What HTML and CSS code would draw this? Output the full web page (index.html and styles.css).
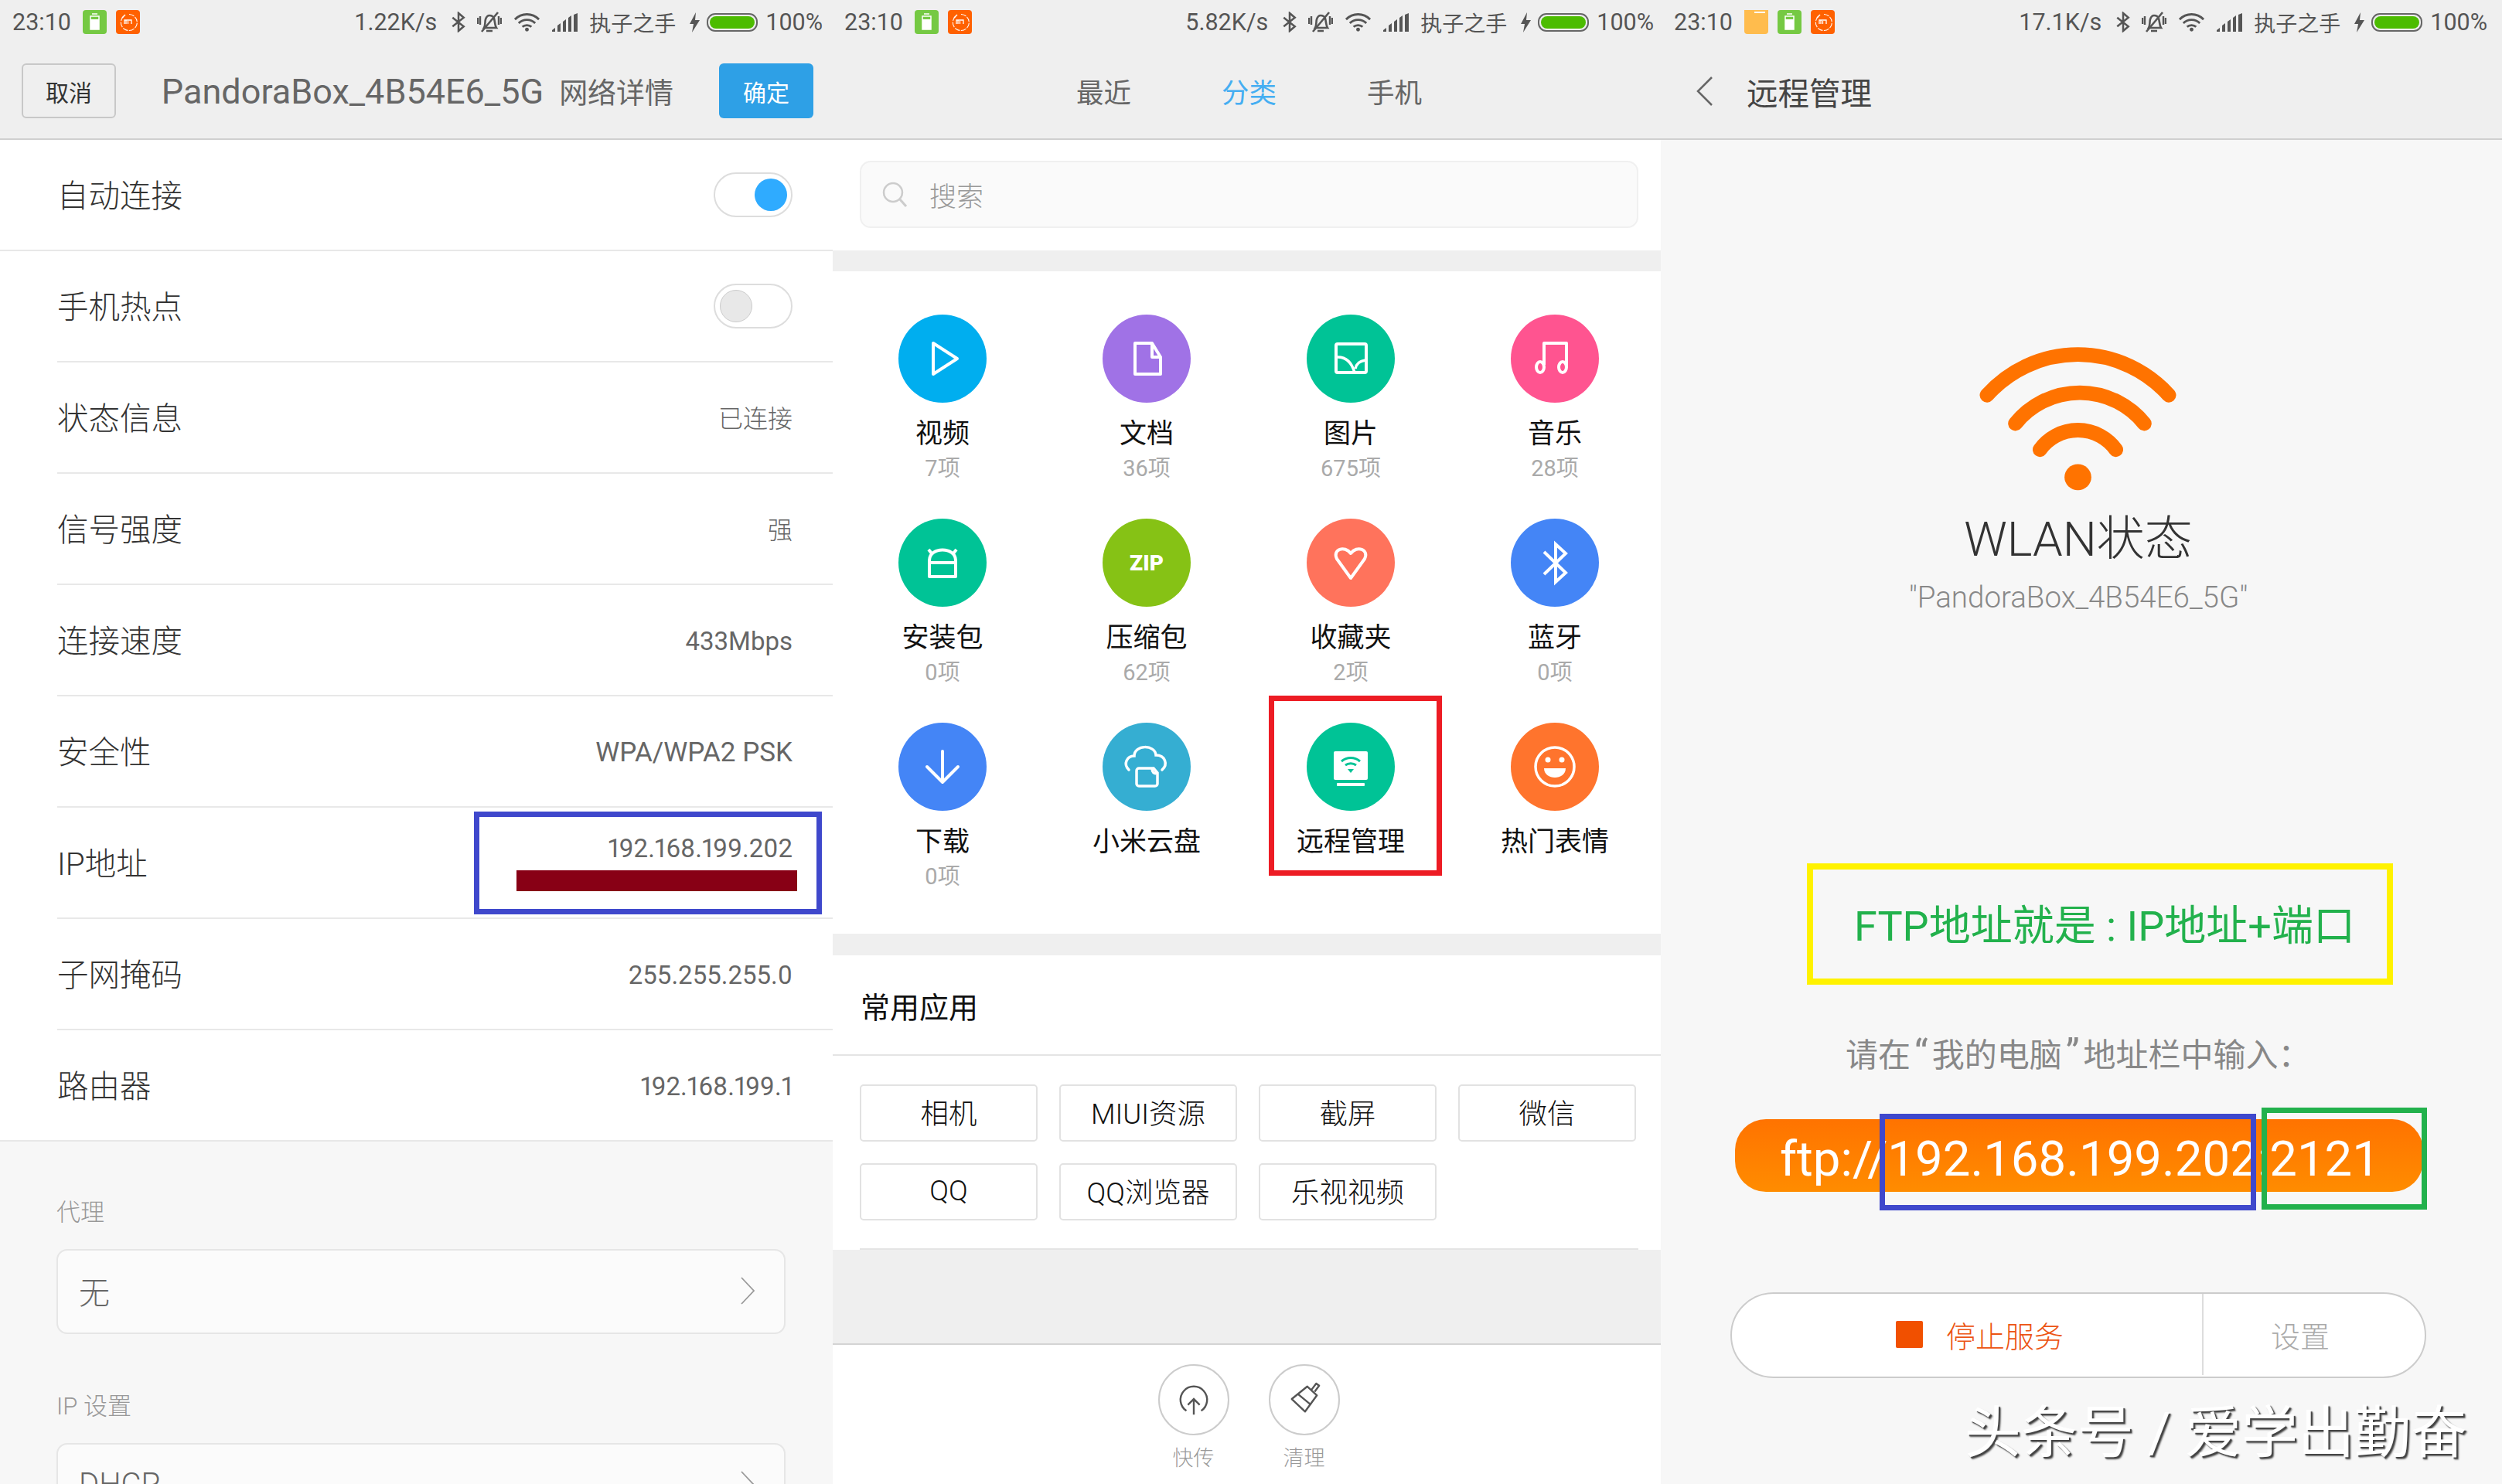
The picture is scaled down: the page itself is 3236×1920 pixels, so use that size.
FILE: index.html
```html
<!DOCTYPE html>
<html lang="zh-CN">
<head>
    <meta charset="UTF-8">
    <title>FTP</title>
    <link rel="stylesheet" href="styles.css">
</head>
<body>

    <svg class="defs" width="0" height="0">
        <symbol id="s-bt" viewBox="0 0 20 28"><path d="M2 8l15 12-7 6V2l7 6L2 20" fill="none" stroke="#555" stroke-width="2.6"/></symbol>
        <symbol id="s-bell" viewBox="0 0 32 30"><path d="M9 22c2-3 1-8 2-11 1-3 3-5 5-5s5 1 6 4c1 3 1 9 3 12z" fill="none" stroke="#555" stroke-width="2.6"/><path d="M12 26h8M1 9v8M4 7v11M31 9v8M28 7v11" stroke="#555" stroke-width="2.4" fill="none"/><path d="M6 27L27 2" stroke="#555" stroke-width="2.6"/></symbol>
        <symbol id="s-wifi" viewBox="0 0 36 25"><path d="M2 9c9-9 23-9 32 0M7 14c6-6 16-6 22 0M12 19c3-3 9-3 12 0" fill="none" stroke="#555" stroke-width="3"/><circle cx="18" cy="22.5" r="2.5" fill="#555"/></symbol>
        <symbol id="s-signal" viewBox="0 0 33 24"><path d="M0 24v-2l4-3v5zM7 24v-8l4-3v11zM14 24V11l4-3v16zM21 24V6l4-3v21zM28 24V2l5-2v24z" fill="#555"/></symbol>
        <symbol id="s-bolt" viewBox="0 0 15 26"><path d="M9 0L1 15h5l-2 11 10-16H8z" fill="#555"/></symbol>
        <symbol id="s-batt" viewBox="0 0 66 24"><rect x="1" y="1" width="64" height="22" rx="10" fill="none" stroke="#666" stroke-width="2"/><rect x="4" y="4" width="58" height="16" rx="8" fill="#4cbc00"/></symbol>
        <symbol id="s-green" viewBox="0 0 31 31"><rect width="31" height="31" rx="4" fill="#75c943"/><path d="M12 5h7M10 8h11v17H10z" fill="none" stroke="#fff" stroke-width="1.5"/><rect x="10" y="12" width="11" height="13" fill="#fff"/></symbol>
        <symbol id="s-mi" viewBox="0 0 31 31"><rect width="31" height="31" rx="4" fill="#ff6100"/><path d="M10 8A10.5 10.5 0 1 0 17 5.500" fill="none" stroke="#fff" stroke-width="1.100" stroke-dasharray="7 1.500"/><path d="M8 10l4-4" stroke="#fff" stroke-width="1.500"/><path d="M11 18v-5h9v5M15.500 14v4M13 13v5" fill="none" stroke="#fff" stroke-width="1.300"/></symbol>
        <symbol id="s-folder" viewBox="0 0 31 31"><rect width="31" height="41" y="-10" rx="4" fill="#ffbc4d"/><path d="M13 3h14" stroke="#fff" stroke-width="2"/></symbol>
    </svg>

    <div class="screen">

        <!-- wifi details -->
        <section class="panel panel-wifi">
            <div class="statusbar">
                <span class="time">23:10</span>
                <svg class="st-app"><use href="#s-green"/></svg>
                <svg class="st-app"><use href="#s-mi"/></svg>
                <span class="status-right">
                    <span class="speed">1.22K/s</span>
                    <svg class="st-bt"><use href="#s-bt"/></svg>
                    <svg class="st-bell"><use href="#s-bell"/></svg>
                    <svg class="st-wifi"><use href="#s-wifi"/></svg>
                    <svg class="st-signal"><use href="#s-signal"/></svg>
                    <span class="carrier">执子之手</span>
                    <svg class="st-bolt"><use href="#s-bolt"/></svg>
                    <svg class="st-batt"><use href="#s-batt"/></svg>
                    <span class="percent">100%</span>
                </span>
            </div>
            <div class="header header-wifi">
                <span class="btn-cancel">取消</span>
                <span class="wifi-title">PandoraBox_4B54E6_5G<span class="wifi-title-cn">网络详情</span></span>
                <span class="btn-ok">确定</span>
            </div>
            <div class="row row-full">
                <span class="row-label">自动连接</span>
                <span class="toggle toggle-on"><i></i></span>
            </div>
            <div class="row">
                <span class="row-label">手机热点</span>
                <span class="toggle"><i></i></span>
            </div>
            <div class="row"><span class="row-label">状态信息</span><span class="row-value value-small">已连接</span></div>
            <div class="row"><span class="row-label">信号强度</span><span class="row-value value-small">强</span></div>
            <div class="row"><span class="row-label">连接速度</span><span class="row-value">433Mbps</span></div>
            <div class="row"><span class="row-label">安全性</span><span class="row-value value-wide">WPA/WPA2 PSK</span></div>
            <div class="row row-ip">
                <span class="row-label">IP地址</span>
                <div class="ip-mark">
                    <span class="row-value">192.168.199.202</span>
                    <div class="ip-hide"></div>
                </div>
            </div>
            <div class="row"><span class="row-label">子网掩码</span><span class="row-value">255.255.255.0</span></div>
            <div class="row row-full"><span class="row-label">路由器</span><span class="row-value">192.168.199.1</span></div>
            <div class="settings">
                <div class="set-label">代理</div>
                <div class="set-box">
                    <span>无</span>
                    <svg class="chev" viewBox="0 0 20 36"><path d="M2 1l16 17L2 35" fill="none" stroke="#999" stroke-width="1.800"/></svg>
                </div>
                <div class="set-label set-label-2">IP 设置</div>
                <div class="set-box">
                    <span>DHCP</span>
                    <svg class="chev" viewBox="0 0 20 36"><path d="M2 1l16 17L2 35" fill="none" stroke="#999" stroke-width="1.800"/></svg>
                </div>
            </div>
        </section>

        <!-- file manager -->
        <section class="panel panel-files">
            <div class="statusbar">
                <span class="time">23:10</span>
                <svg class="st-app"><use href="#s-green"/></svg>
                <svg class="st-app"><use href="#s-mi"/></svg>
                <span class="status-right">
                    <span class="speed">5.82K/s</span>
                    <svg class="st-bt"><use href="#s-bt"/></svg>
                    <svg class="st-bell"><use href="#s-bell"/></svg>
                    <svg class="st-wifi"><use href="#s-wifi"/></svg>
                    <svg class="st-signal"><use href="#s-signal"/></svg>
                    <span class="carrier">执子之手</span>
                    <svg class="st-bolt"><use href="#s-bolt"/></svg>
                    <svg class="st-batt"><use href="#s-batt"/></svg>
                    <span class="percent">100%</span>
                </span>
            </div>
            <div class="header tabs">
                <span>最近</span>
                <span class="tab-on">分类</span>
                <span>手机</span>
            </div>
            <div class="search-wrap">
                <div class="search">
                    <svg class="search-ico" viewBox="0 0 33 33"><circle cx="14" cy="14" r="12" fill="none" stroke="#ccc" stroke-width="2.500"/><path d="M23 23l8 9" stroke="#ccc" stroke-width="3"/></svg>
                    <span>搜索</span>
                </div>
            </div>
            <div class="cats">
                <div class="cat">
                    <div class="cat-ico c-video"><svg viewBox="0 0 114 114"><path d="M45 37v40l31-20z" fill="none" stroke="#fff" stroke-width="4" stroke-linejoin="round"/></svg></div>
                    <div class="cat-name">视频</div><div class="cat-num">7项</div>
                </div>
                <div class="cat">
                    <div class="cat-ico c-doc"><svg viewBox="0 0 114 114"><path d="M42 37h22l11 18v22H42zM64 37v18h11" fill="none" stroke="#fff" stroke-width="4" stroke-linejoin="round"/></svg></div>
                    <div class="cat-name">文档</div><div class="cat-num">36项</div>
                </div>
                <div class="cat">
                    <div class="cat-ico c-pic"><svg viewBox="0 0 114 114"><rect x="38" y="38" width="39" height="37" rx="2" fill="none" stroke="#fff" stroke-width="4"/><path d="M38 55c12-1 20 6 24 20M63 70c1-6 6-10 13-11" fill="none" stroke="#fff" stroke-width="3.500"/></svg></div>
                    <div class="cat-name">图片</div><div class="cat-num">675项</div>
                </div>
                <div class="cat">
                    <div class="cat-ico c-music"><svg viewBox="0 0 114 114"><path d="M43 65V37h29v30" fill="none" stroke="#fff" stroke-width="4" stroke-linejoin="round"/><ellipse cx="38" cy="68" rx="5" ry="7" fill="none" stroke="#fff" stroke-width="4"/><ellipse cx="67" cy="68" rx="5" ry="7" fill="none" stroke="#fff" stroke-width="4"/></svg></div>
                    <div class="cat-name">音乐</div><div class="cat-num">28项</div>
                </div>
                <div class="cat">
                    <div class="cat-ico c-apk"><svg viewBox="0 0 114 114"><path d="M40 57v-3c0-18 34-18 34 0v21H40zM40 57h34M39 40l4 5M75 40l-4 5" fill="none" stroke="#fff" stroke-width="4" stroke-linejoin="round"/></svg></div>
                    <div class="cat-name">安装包</div><div class="cat-num">0项</div>
                </div>
                <div class="cat">
                    <div class="cat-ico c-zip"><span class="zip">ZIP</span></div>
                    <div class="cat-name">压缩包</div><div class="cat-num">62项</div>
                </div>
                <div class="cat">
                    <div class="cat-ico c-fav"><svg viewBox="0 0 114 114"><path d="M57 77L39 52c-6-12 10-18 18-7 8-11 24-5 18 7z" fill="none" stroke="#fff" stroke-width="4" stroke-linejoin="round"/></svg></div>
                    <div class="cat-name">收藏夹</div><div class="cat-num">2项</div>
                </div>
                <div class="cat">
                    <div class="cat-ico c-bt"><svg viewBox="0 0 114 114"><path d="M43 43l28 27-13 12V33l13 12-28 27" fill="none" stroke="#fff" stroke-width="4"/></svg></div>
                    <div class="cat-name">蓝牙</div><div class="cat-num">0项</div>
                </div>
                <div class="cat">
                    <div class="cat-ico c-bt"><svg viewBox="0 0 114 114"><path d="M57 37v39M37 57l20 20 20-20" fill="none" stroke="#fff" stroke-width="4" stroke-linecap="round" stroke-linejoin="round"/></svg></div>
                    <div class="cat-name">下载</div><div class="cat-num">0项</div>
                </div>
                <div class="cat">
                    <div class="cat-ico c-cloud"><svg viewBox="0 0 114 114"><path d="M34 61c-8-8-2-18 7-18 0-15 27-15 28-1 12 0 16 12 8 19" fill="none" stroke="#fff" stroke-width="3.500" stroke-linecap="round"/><path d="M47 59h19l5 6v14a3 3 0 0 1-3 3H47a3 3 0 0 1-3-3V62a3 3 0 0 1 3-3zM64 59c0 5 2 7 7 7" fill="none" stroke="#fff" stroke-width="3.500"/></svg></div>
                    <div class="cat-name">小米云盘</div>
                </div>
                <div class="cat">
                    <div class="cat-ico c-apk"><svg viewBox="0 0 114 114"><rect x="35" y="37" width="44" height="37" rx="2" fill="#fff"/><rect x="39" y="78" width="36" height="4" rx="1" fill="#fff"/><path d="M45 50c7-6 17-6 24 0M50 55c4-3 10-3 14 0" fill="none" stroke="#00c396" stroke-width="3"/><path d="M53 60h8l-4 5z" fill="#00c396"/></svg></div>
                    <div class="cat-name">远程管理</div>
                </div>
                <div class="cat">
                    <div class="cat-ico c-smile"><svg viewBox="0 0 114 114"><circle cx="57" cy="57" r="25" fill="none" stroke="#fff" stroke-width="3.500"/><circle cx="48" cy="48" r="3.500" fill="#fff"/><circle cx="66" cy="48" r="3.500" fill="#fff"/><path d="M43 59h28c0 16-28 16-28 0z" fill="#fff"/></svg></div>
                    <div class="cat-name">热门表情</div>
                </div>
                <div class="red-mark"></div>
            </div>
            <div class="apps-head">常用应用</div>
            <div class="apps">
                <span class="app">相机</span>
                <span class="app">MIUI资源</span>
                <span class="app">截屏</span>
                <span class="app">微信</span>
                <span class="app">QQ</span>
                <span class="app">QQ浏览器</span>
                <span class="app">乐视视频</span>
            </div>
            <div class="files-gap"></div>
            <div class="tools">
                <div class="tool">
                    <span class="tool-ico"><svg viewBox="0 0 92 92"><path d="M36 61a18 18 0 1 1 20 0M46 66V45M38 53l8-8 8 8" fill="none" stroke="#555" stroke-width="2.500"/></svg></span>
                    <span class="tool-name">快传</span>
                </div>
                <div class="tool">
                    <span class="tool-ico"><svg viewBox="0 0 92 92"><path d="M56 32l6-8 4 3-6 8M29 45l21-17 13 12-16 22z" fill="none" stroke="#555" stroke-width="2.500" stroke-linejoin="round"/><path d="M37 38l18 15" stroke="#555" stroke-width="2.500"/></svg></span>
                    <span class="tool-name">清理</span>
                </div>
            </div>
        </section>

        <!-- remote management -->
        <section class="panel panel-remote">
            <div class="statusbar">
                <span class="time">23:10</span>
                <svg class="st-app"><use href="#s-folder"/></svg>
                <svg class="st-app"><use href="#s-green"/></svg>
                <svg class="st-app"><use href="#s-mi"/></svg>
                <span class="status-right">
                    <span class="speed">17.1K/s</span>
                    <svg class="st-bt"><use href="#s-bt"/></svg>
                    <svg class="st-bell"><use href="#s-bell"/></svg>
                    <svg class="st-wifi"><use href="#s-wifi"/></svg>
                    <svg class="st-signal"><use href="#s-signal"/></svg>
                    <span class="carrier">执子之手</span>
                    <svg class="st-bolt"><use href="#s-bolt"/></svg>
                    <svg class="st-batt"><use href="#s-batt"/></svg>
                    <span class="percent">100%</span>
                </span>
            </div>
            <div class="header header-remote">
                <svg class="back" viewBox="0 0 22 38"><path d="M20 1L2 19l18 18" fill="none" stroke="#666" stroke-width="2.500"/></svg>
                <span>远程管理</span>
            </div>
            <svg class="big-wifi" viewBox="0 0 257 186">
                <path d="M10 62A159 159 0 0 1 247 62M47 99A108 108 0 0 1 215 99M79 133A61 61 0 0 1 178 133" fill="none" stroke="#ff7300" stroke-width="19" stroke-linecap="round"/>
                <ellipse cx="128.500" cy="169" rx="17.500" ry="17" fill="#ff7300"/>
            </svg>
            <div class="wlan-title">WLAN状态</div>
            <div class="wlan-ssid">"PandoraBox_4B54E6_5G"</div>
            <div class="ftp-note">FTP地址就是 : IP地址+端口</div>
            <div class="hint">请在<span class="quote">“</span>我的电脑<span class="quote">”</span>地址栏中输入：</div>
            <div class="ftp-pill">
                ftp://192.168.199.202:2121
                <div class="mark-ip"></div>
                <div class="mark-port"></div>
            </div>
            <div class="actions">
                <div class="act-stop"><i></i>停止服务</div>
                <div class="act-set">设置</div>
            </div>
            <div class="watermark">头条号 / 爱学出勤奋</div>
        </section>

    </div>

</body>
</html>
```

FILE: styles.css
```css
* {
    box-sizing: border-box;
}
body {
    margin: 0;
    width: 3236px;
    height: 1920px;
    overflow: hidden;
    background: #fff;
    font-family: Roboto, "Noto Sans CJK SC", sans-serif;
    font-weight: 300;
    color: #333;
}
.defs {
    display: block;
    height: 0;
}
.screen {
    display: flex;
    width: 3236px;
    height: 1920px;
}
.panel {
    position: relative;
    display: flex;
    flex-direction: column;
    height: 1920px;
    overflow: hidden;
}
.panel-wifi {
    width: 1077px;
}
.panel-files {
    width: 1071px;
    background: #fff;
}
.panel-remote {
    width: 1088px;
    background: #f7f7f7;
}

/* status bar */
.statusbar {
    display: flex;
    align-items: center;
    height: 60px;
    padding: 0 13px 3px 16px;
    background: #efefef;
    color: #555;
    font-size: 30.500px;
    font-weight: 400;
    flex: none;
}
.panel-files .statusbar {
    padding: 0 9px 3px 15px;
}
.panel-remote .statusbar {
    padding: 0 19px 3px 17px;
}
.time {
    margin-right: 15px;
}
.st-app {
    width: 31px;
    height: 31px;
    margin-right: 12px;
}
.status-right {
    display: flex;
    align-items: center;
    margin-left: auto;
}
.speed {
    margin-right: 18px;
}
.st-bt {
    width: 20px;
    height: 27px;
    margin-right: 14px;
}
.st-bell {
    width: 32px;
    height: 30px;
    margin-right: 15px;
}
.st-wifi {
    width: 35px;
    height: 25px;
    margin-right: 15px;
}
.st-signal {
    width: 33px;
    height: 24px;
    margin-right: 15px;
}
.carrier {
    font-size: 28px;
    margin-right: 17px;
}
.st-bolt {
    width: 15px;
    height: 26px;
    margin-right: 8px;
}
.st-batt {
    width: 66px;
    height: 24px;
    margin-right: 10px;
}

/* headers */
.header {
    display: flex;
    align-items: center;
    height: 121px;
    background: #efefef;
    border-bottom: 2px solid #cfcfcf;
    flex: none;
}
.header-wifi {
    padding: 0 25px 4px 28px;
    justify-content: space-between;
}
.btn-cancel,
.btn-ok {
    width: 122px;
    height: 71px;
    display: flex;
    align-items: center;
    justify-content: center;
    font-size: 30px;
    font-weight: 400;
    border-radius: 6px;
}
.btn-cancel {
    border: 2px solid #c8c8c8;
    color: #333;
}
.btn-ok {
    background: #2ea0e6;
    color: #fff;
}
.wifi-title {
    font-size: 45px;
    font-weight: 400;
    color: #666;
    white-space: nowrap;
}
.wifi-title-cn {
    margin-left: 20px;
    font-size: 37px;
}
.tabs {
    justify-content: flex-start;
    padding: 0 0 5px 315px;
    gap: 117px;
    font-size: 35.500px;
    font-weight: 400;
    color: #666;
}
.tab-on {
    color: #45aef2;
}
.header-remote {
    padding: 0 0 3px 46px;
    font-size: 40.500px;
    font-weight: 400;
    color: #444;
}
.back {
    width: 22px;
    height: 38px;
    margin-right: 43px;
}

/* wifi rows */
.row {
    display: flex;
    align-items: center;
    justify-content: space-between;
    height: 144px;
    margin-left: 74px;
    padding-right: 52px;
    border-bottom: 2px solid #e8e8e8;
    position: relative;
    flex: none;
}
.row-full {
    margin-left: 0;
    padding-left: 74px;
}
.row-label {
    margin-bottom: 3px;
    font-size: 40.500px;
    color: #333;
}
.row-value {
    padding-top: 3px;
    font-size: 33px;
    font-weight: 400;
    font-variant-numeric: proportional-nums;
    color: #666;
}
.value-small {
    padding-top: 0;
    margin-bottom: 3px;
    font-size: 32px;
    font-weight: 300;
}
.value-wide {
    font-size: 35px;
}
.toggle {
    position: relative;
    width: 102px;
    height: 58px;
    border: 2px solid #ddd;
    border-radius: 29px;
}
.toggle i {
    position: absolute;
    left: 6px;
    top: 6px;
    width: 42px;
    height: 42px;
    border-radius: 50%;
    background: #e8e8e8;
    border: 1px solid #ccc;
}
.toggle-on i {
    left: auto;
    right: 5px;
    background: #2fabff;
    border: none;
}

/* blue box over the ip row */
.ip-mark {
    position: absolute;
    left: 539px;
    top: 5px;
    width: 450px;
    height: 133px;
    border: 7px solid #3f48cc;
    padding: 16px 31px 0 0;
    text-align: right;
}
.ip-mark .row-value {
    font-size: 33px;
    line-height: 44px;
    display: block;
}
.ip-hide {
    position: absolute;
    left: 48px;
    right: 25px;
    top: 69px;
    height: 27px;
    background: #880015;
}

/* proxy settings */
.settings {
    flex: 1;
    background: #f7f7f7;
    padding: 71px 61px 0 73px;
}
.set-label {
    font-size: 31px;
    line-height: 42px;
    color: #999;
    margin-bottom: 26px;
}
.set-label-2 {
    margin-top: 73px;
    margin-bottom: 26px;
}
.set-box {
    display: flex;
    align-items: center;
    justify-content: space-between;
    height: 110px;
    padding: 0 37px 3px 27px;
    background: #fbfbfb;
    border: 2px solid #e6e6e6;
    border-radius: 14px;
    font-size: 40px;
    color: #666;
}
.chev {
    width: 20px;
    height: 36px;
}

/* file manager */
.search-wrap {
    background: #fff;
    padding: 27px 29px 29px 35px;
    flex: none;
}
.search {
    display: flex;
    align-items: center;
    height: 87px;
    padding-left: 27px;
    background: #fafafa;
    border: 2px solid #f0f0f0;
    border-radius: 14px;
    font-size: 35px;
    color: #999;
}
.search-ico {
    width: 33px;
    height: 33px;
    margin-right: 28px;
}
.cats {
    position: relative;
    display: grid;
    grid-template-columns: repeat(4, 264px);
    grid-auto-rows: 264px;
    flex: none;
    height: 912px;
    padding: 56px 0 0 10px;
    background: #fff;
    border-top: 27px solid #efefef;
    border-bottom: 28px solid #efefef;
}
.cat {
    display: flex;
    flex-direction: column;
    align-items: center;
}
.cat-ico {
    width: 114px;
    height: 114px;
    border-radius: 50%;
    display: flex;
    align-items: center;
    justify-content: center;
    flex: none;
}
.cat-ico svg {
    width: 114px;
    height: 114px;
}
.c-video { background: #00aeef; }
.c-doc { background: #a072e6; }
.c-pic,
.c-apk { background: #00c396; }
.c-music { background: #ff5490; }
.c-zip { background: #86c215; }
.c-fav { background: #ff735c; }
.c-bt { background: #4485f6; }
.c-cloud { background: #35aed2; }
.c-smile { background: #ff742d; }
.zip {
    font-size: 28px;
    font-weight: 900;
    color: #fff;
}
.cat-name {
    margin-top: 21px;
    font-size: 35px;
    line-height: 40px;
    font-weight: 400;
    color: #111;
}
.cat-num {
    margin-top: 6px;
    font-size: 29px;
    font-weight: 400;
    line-height: 36px;
    color: #aaa;
}
.red-mark {
    position: absolute;
    left: 564px;
    top: 549px;
    width: 224px;
    height: 233px;
    border: 7px solid #ed1c24;
}
.apps-head {
    display: flex;
    align-items: center;
    height: 130px;
    padding-left: 36px;
    background: #fff;
    border-bottom: 2px solid #e4e4e4;
    font-size: 38px;
    font-weight: 400;
    color: #111;
    flex: none;
}
.apps {
    display: grid;
    grid-template-columns: repeat(4, 230px);
    column-gap: 28px;
    row-gap: 28px;
    height: 251px;
    margin: 0 29px 0 35px;
    padding-top: 37px;
    background: #fff;
    border-bottom: 2px solid #e4e4e4;
    align-content: start;
    flex: none;
}
.app {
    display: flex;
    align-items: center;
    justify-content: center;
    height: 74px;
    padding-bottom: 3px;
    border: 2px solid #e2e2e2;
    border-radius: 5px;
    font-size: 36.500px;
    color: #111;
}
.files-gap {
    height: 123px;
    background: #efefef;
    border-bottom: 2px solid #d4d4d4;
    flex: none;
}
.tools {
    display: flex;
    justify-content: center;
    gap: 51px;
    padding: 25px 0 0 5px;
}
.tool {
    display: flex;
    flex-direction: column;
    align-items: center;
}
.tool-ico {
    width: 92px;
    height: 92px;
    border: 2px solid #ccc;
    border-radius: 50%;
}
.tool-ico svg {
    display: block;
    width: 88px;
    height: 88px;
}
.tool-name {
    margin-top: 12px;
    font-size: 27px;
    line-height: 36px;
    color: #999;
}

/* remote management */
.big-wifi {
    display: block;
    width: 255px;
    height: 186px;
    margin: 268px 0 0 412px;
    flex: none;
}
.wlan-title {
    margin-top: 23px;
    height: 80px;
    line-height: 80px;
    padding-right: 8px;
    text-align: center;
    font-size: 62px;
    color: #333;
}
.wlan-ssid {
    margin-top: 13px;
    height: 44px;
    line-height: 44px;
    padding-right: 8px;
    text-align: center;
    font-size: 38.500px;
    color: #888;
}
.ftp-note {
    width: 758px;
    height: 157px;
    margin: 322px 0 0 189px;
    padding-left: 53px;
    border: 8px solid #fff200;
    line-height: 147px;
    font-size: 54px;
    font-weight: 400;
    color: #22b14c;
    white-space: nowrap;
}
.hint {
    margin-top: 67px;
    height: 50px;
    line-height: 50px;
    padding-left: 239px;
    font-size: 42px;
    font-weight: 400;
    color: #888;
    white-space: nowrap;
}
.quote {
    padding: 0 5px;
    font-size: 50px;
    line-height: 0;
}
.ftp-pill {
    position: relative;
    width: 890px;
    height: 94px;
    margin: 57px 0 0 96px;
    padding-left: 58px;
    border-radius: 40px;
    background: linear-gradient(#ff7300, #ff8c00);
    color: #fff;
    font-size: 63.500px;
    font-weight: 400;
    line-height: 104px;
    white-space: nowrap;
}
.mark-ip {
    position: absolute;
    left: 187px;
    top: -7px;
    width: 487px;
    height: 125px;
    border: 7px solid #3f48cc;
}
.mark-port {
    position: absolute;
    left: 681px;
    top: -15px;
    width: 214px;
    height: 132px;
    border: 7px solid #22b14c;
}
.actions {
    display: flex;
    width: 900px;
    height: 111px;
    margin: 130px 0 0 90px;
    padding-bottom: 2px;
    background: #fff;
    border: 2px solid #ccc;
    border-radius: 56px;
    font-size: 38px;
    flex: none;
}
.act-stop {
    display: flex;
    align-items: center;
    width: 610px;
    padding-left: 212px;
    border-right: 2px solid #ddd;
    color: #ec5413;
}
.act-stop i {
    width: 35px;
    height: 35px;
    margin-right: 30px;
    background: #f15000;
    border-radius: 2px;
}
.act-set {
    flex: 1;
    display: flex;
    align-items: center;
    justify-content: center;
    padding-right: 36px;
    color: #aaa;
}
.watermark {
    position: absolute;
    right: 45px;
    top: 1804px;
    font-size: 73px;
    line-height: 100px;
    font-weight: 400;
    color: #fff;
    text-shadow: 2px 2px 1px #444, 3px 3px 2px #777;
    white-space: nowrap;
}
```
